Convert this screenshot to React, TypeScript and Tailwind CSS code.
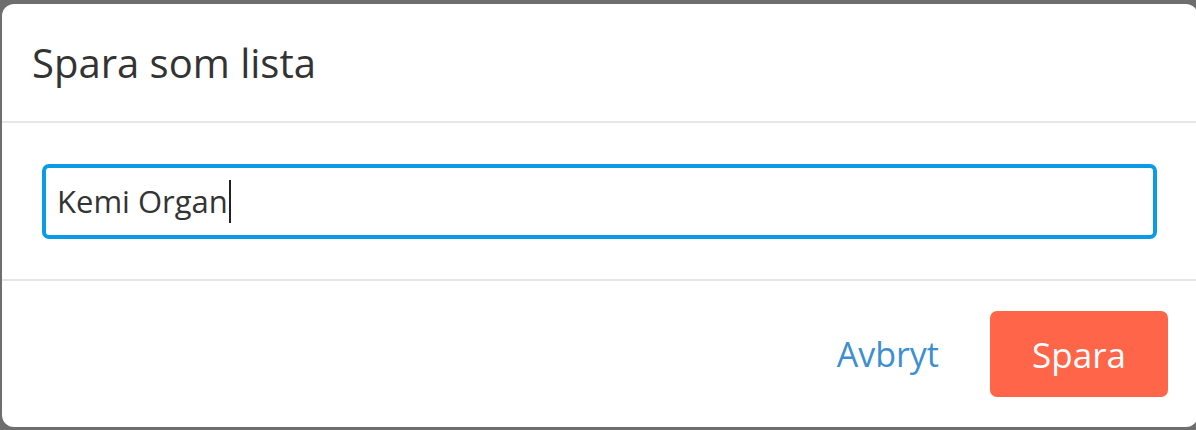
import React from 'react';

const SaveListModal: React.FC = () => {
  return (
    <div className="w-[1196px] h-[430px] overflow-hidden bg-[#6e6e6e] pl-[2px] pt-[4px] font-['Open_Sans',sans-serif]">
      <div className="w-[1196px] h-[423px] bg-white rounded-[12px] flex flex-col">
        {/* Header */}
        <div className="h-[119px] shrink-0 flex items-center px-[30px] border-b-2 border-[#e6e6e6]">
          <h2 className="text-[40px] leading-none text-[#333333]">Spara som lista</h2>
        </div>

        {/* Body */}
        <div className="h-[158px] shrink-0 flex items-center px-[40px] border-b-2 border-[#e6e6e6]">
          <div className="w-[1115px] h-[75px] border-[4px] border-[#0a9ae6] rounded-[7px] flex items-center px-[11px]">
            <span className="text-[31px] text-[#333333] leading-none">Kemi Organ</span>
            <span className="w-[2px] h-[43px] bg-[#222222] ml-[1px]" />
          </div>
        </div>

        {/* Footer */}
        <div className="flex-1 flex items-center justify-end gap-[51px] pr-[30px]">
          <button className="text-[34px] text-[#3d8fd1] leading-none">Avbryt</button>
          <button className="w-[178px] h-[86px] bg-[#ff6549] rounded-[7px] text-[35px] text-white leading-none">
            Spara
          </button>
        </div>
      </div>
    </div>
  );
};

export default function App() {
  return <SaveListModal />;
}
